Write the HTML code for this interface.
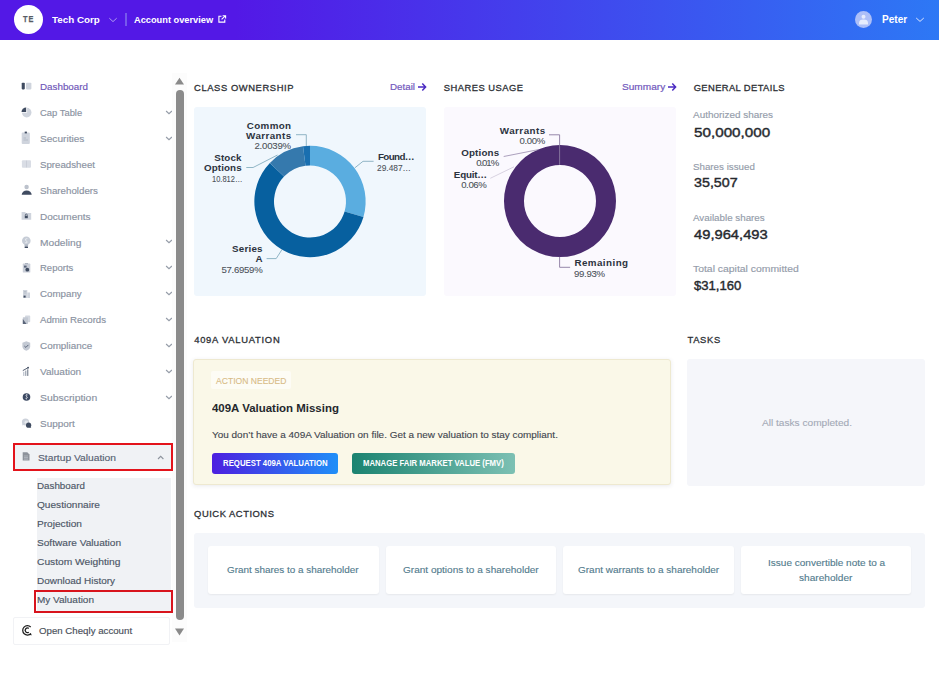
<!DOCTYPE html>
<html><head><meta charset="utf-8">
<style>
html,body{margin:0;padding:0;width:939px;height:675px;overflow:hidden;background:#fff;}
body{position:relative;font-family:"Liberation Sans",sans-serif;}
.t{position:absolute;white-space:nowrap;line-height:1;}
.b{position:absolute;}
svg.b{overflow:visible;}
</style></head><body>
<div class="b" style="left:0px;top:0px;width:939px;height:40px;background:linear-gradient(90deg,#5318E6 25%,#2D78F5 100%);"></div>
<div class="b" style="left:13.5px;top:4.5px;width:29px;height:29px;border-radius:50%;background:#fff;"></div>
<div class="t" style="left:23.0px;top:15.4px;font-size:9.2px;font-weight:700;color:#575c64;letter-spacing:1.3px;-webkit-text-stroke:0.25px #575c64;transform:scaleX(0.8);transform-origin:0 0;">TE</div>
<div class="t" style="left:52.30px;top:15.36px;font-size:9.50px;color:#fff;font-weight:700;transform:scaleX(1.0330);transform-origin:0 0;">Tech Corp</div>
<svg class="b" style="left:108px;top:16.5px" width="10" height="6" viewBox="0 0 10 6"><path d="M1.3 1.2 L5 4.6 L8.7 1.2" fill="none" stroke="#b7a6f2" stroke-width="0.9"/></svg>
<div class="b" style="left:125.3px;top:13px;width:1.5px;height:12.5px;background:#7659ec;"></div>
<div class="t" style="left:134.40px;top:16.20px;font-size:9.10px;color:#fff;font-weight:700;transform:scaleX(1.0167);transform-origin:0 0;">Account overview</div>
<svg class="b" style="left:217.5px;top:15px" width="9" height="8" viewBox="0 0 9 8"><path d="M3.5 1.2 H0.9 V7.1 H6.8 V4.6" fill="none" stroke="#fff" stroke-width="1.1"/><path d="M3.6 4.3 L7.3 0.8 M4.6 0.7 H7.6 V3.6" fill="none" stroke="#fff" stroke-width="1.1"/></svg>
<svg class="b" style="left:854.7px;top:10.8px" width="17" height="17" viewBox="0 0 17 17"><circle cx="8.5" cy="8.5" r="8.5" fill="#adbff8"/><circle cx="8.5" cy="5.8" r="2" fill="#e6ecfd"/><path d="M4 13.4 V12 Q4 8.6 8.5 8.6 Q13 8.6 13 12 V13.4 Z" fill="#e6ecfd"/></svg>
<div class="t" style="left:881.80px;top:14.60px;font-size:10.40px;color:#fff;font-weight:700;transform:scaleX(0.9688);transform-origin:0 0;">Peter</div>
<svg class="b" style="left:914.5px;top:16.5px" width="10" height="6" viewBox="0 0 10 6"><path d="M1.2 1 L5 4.4 L8.8 1" fill="none" stroke="#dde5fd" stroke-width="1.0"/></svg>
<div class="t" style="left:39.80px;top:83.03px;font-size:9.30px;color:#6e55b8;font-weight:400;transform:scaleX(1.0550);transform-origin:0 0;-webkit-text-stroke:0.15px #6e55b8;">Dashboard</div>
<div class="t" style="left:39.80px;top:108.95px;font-size:9.30px;color:#8a92a1;font-weight:400;transform:scaleX(1.0117);transform-origin:0 0;-webkit-text-stroke:0.15px #8a92a1;">Cap Table</div>
<svg class="b" style="left:165px;top:109.8px" width="8" height="5" viewBox="0 0 8 5"><path d="M1.1 1 L4 3.7 L6.9 1" fill="none" stroke="#959ca8" stroke-width="1.15"/></svg>
<div class="t" style="left:39.80px;top:134.87px;font-size:9.30px;color:#8a92a1;font-weight:400;transform:scaleX(1.0873);transform-origin:0 0;-webkit-text-stroke:0.15px #8a92a1;">Securities</div>
<svg class="b" style="left:165px;top:135.7px" width="8" height="5" viewBox="0 0 8 5"><path d="M1.1 1 L4 3.7 L6.9 1" fill="none" stroke="#959ca8" stroke-width="1.15"/></svg>
<div class="t" style="left:39.80px;top:160.79px;font-size:9.30px;color:#8a92a1;font-weight:400;transform:scaleX(1.0428);transform-origin:0 0;-webkit-text-stroke:0.15px #8a92a1;">Spreadsheet</div>
<div class="t" style="left:39.80px;top:186.71px;font-size:9.30px;color:#8a92a1;font-weight:400;transform:scaleX(1.0485);transform-origin:0 0;-webkit-text-stroke:0.15px #8a92a1;">Shareholders</div>
<div class="t" style="left:39.80px;top:212.63px;font-size:9.30px;color:#8a92a1;font-weight:400;transform:scaleX(1.0757);transform-origin:0 0;-webkit-text-stroke:0.15px #8a92a1;">Documents</div>
<div class="t" style="left:39.80px;top:238.55px;font-size:9.30px;color:#8a92a1;font-weight:400;transform:scaleX(1.0943);transform-origin:0 0;-webkit-text-stroke:0.15px #8a92a1;">Modeling</div>
<svg class="b" style="left:165px;top:239.4px" width="8" height="5" viewBox="0 0 8 5"><path d="M1.1 1 L4 3.7 L6.9 1" fill="none" stroke="#959ca8" stroke-width="1.15"/></svg>
<div class="t" style="left:39.80px;top:264.47px;font-size:9.30px;color:#8a92a1;font-weight:400;transform:scaleX(1.0227);transform-origin:0 0;-webkit-text-stroke:0.15px #8a92a1;">Reports</div>
<svg class="b" style="left:165px;top:265.3px" width="8" height="5" viewBox="0 0 8 5"><path d="M1.1 1 L4 3.7 L6.9 1" fill="none" stroke="#959ca8" stroke-width="1.15"/></svg>
<div class="t" style="left:39.80px;top:290.39px;font-size:9.30px;color:#8a92a1;font-weight:400;transform:scaleX(1.0476);transform-origin:0 0;-webkit-text-stroke:0.15px #8a92a1;">Company</div>
<svg class="b" style="left:165px;top:291.3px" width="8" height="5" viewBox="0 0 8 5"><path d="M1.1 1 L4 3.7 L6.9 1" fill="none" stroke="#959ca8" stroke-width="1.15"/></svg>
<div class="t" style="left:39.80px;top:316.31px;font-size:9.30px;color:#8a92a1;font-weight:400;transform:scaleX(1.0397);transform-origin:0 0;-webkit-text-stroke:0.15px #8a92a1;">Admin Records</div>
<svg class="b" style="left:165px;top:317.2px" width="8" height="5" viewBox="0 0 8 5"><path d="M1.1 1 L4 3.7 L6.9 1" fill="none" stroke="#959ca8" stroke-width="1.15"/></svg>
<div class="t" style="left:39.80px;top:342.23px;font-size:9.30px;color:#8a92a1;font-weight:400;transform:scaleX(1.0630);transform-origin:0 0;-webkit-text-stroke:0.15px #8a92a1;">Compliance</div>
<svg class="b" style="left:165px;top:343.1px" width="8" height="5" viewBox="0 0 8 5"><path d="M1.1 1 L4 3.7 L6.9 1" fill="none" stroke="#959ca8" stroke-width="1.15"/></svg>
<div class="t" style="left:39.80px;top:368.15px;font-size:9.30px;color:#8a92a1;font-weight:400;transform:scaleX(1.0789);transform-origin:0 0;-webkit-text-stroke:0.15px #8a92a1;">Valuation</div>
<svg class="b" style="left:165px;top:369.0px" width="8" height="5" viewBox="0 0 8 5"><path d="M1.1 1 L4 3.7 L6.9 1" fill="none" stroke="#959ca8" stroke-width="1.15"/></svg>
<div class="t" style="left:39.80px;top:394.07px;font-size:9.30px;color:#8a92a1;font-weight:400;transform:scaleX(1.1177);transform-origin:0 0;-webkit-text-stroke:0.15px #8a92a1;">Subscription</div>
<svg class="b" style="left:165px;top:394.9px" width="8" height="5" viewBox="0 0 8 5"><path d="M1.1 1 L4 3.7 L6.9 1" fill="none" stroke="#959ca8" stroke-width="1.15"/></svg>
<div class="t" style="left:39.80px;top:419.99px;font-size:9.30px;color:#8a92a1;font-weight:400;transform:scaleX(1.0685);transform-origin:0 0;-webkit-text-stroke:0.15px #8a92a1;">Support</div>
<svg class="b" style="left:20px;top:81.0px" width="14" height="14" viewBox="0 0 14 14"><rect x="1.7" y="1.7" width="3.1" height="6.7" rx="0.8" fill="#3f4b60"/><rect x="6" y="1.7" width="5.4" height="6.7" rx="0.8" fill="#cfd4dd"/></svg>
<svg class="b" style="left:20px;top:105.0px" width="14" height="14" viewBox="0 0 14 14"><circle cx="6.7" cy="7.6" r="4.8" fill="#cfd4dd"/><path d="M6.2 2.4 V7.1 H1.5 A4.8 4.8 0 0 1 6.2 2.4Z" fill="#3f4b60"/><path d="M6.7 7.6 L6.7 2.8 M6.7 7.6 L1.9 7.6" stroke="#fff" stroke-width="0.7"/></svg>
<svg class="b" style="left:20px;top:131.0px" width="14" height="14" viewBox="0 0 14 14"><rect x="1.7" y="1.5" width="8.1" height="11.4" rx="1" fill="#cfd4dd"/><rect x="4.7" y="0.6" width="2.2" height="1.8" fill="#3f4b60"/><path d="M3.5 7 H6 M3.5 9 H8" stroke="#aab1bd" stroke-width="0.7"/></svg>
<svg class="b" style="left:20px;top:159.0px" width="14" height="14" viewBox="0 0 14 14"><rect x="1.9" y="1.2" width="9.1" height="7.6" rx="1" fill="#d9dde5"/><path d="M6.5 1.6 V8.4" stroke="#bfc5cf" stroke-width="0.6"/></svg>
<svg class="b" style="left:20px;top:183.2px" width="14" height="14" viewBox="0 0 14 14"><circle cx="6.6" cy="4.0" r="2.2" fill="#bcc2cc"/><path d="M1.7 11.8 A5 4.4 0 0 1 11.7 11.8Z" fill="#3f4b60"/></svg>
<svg class="b" style="left:20px;top:210.0px" width="14" height="14" viewBox="0 0 14 14"><path d="M1.6 2 H5 L6 3 H11.2 V9.8 H1.6Z" fill="#cfd4dd"/><rect x="4.8" y="5.8" width="3" height="2.4" fill="#3f4b60"/><path d="M5.3 5.8 V5 A1 1 0 0 1 7.3 5 V5.8" stroke="#3f4b60" stroke-width="0.7" fill="none"/></svg>
<svg class="b" style="left:20px;top:236.0px" width="14" height="14" viewBox="0 0 14 14"><circle cx="6.3" cy="4.8" r="4.3" fill="#c6ccd6"/><rect x="4.5" y="8.3" width="3.6" height="2.3" fill="#b0b7c3"/><rect x="4.6" y="10.4" width="3.4" height="1.6" rx="0.6" fill="#3f4b60"/><path d="M7.4 2.6 Q5 2.4 5.4 4.2 Q7.4 5 7.1 6.6 Q5.6 7.2 4.9 6.5" stroke="#eef0f4" stroke-width="0.8" fill="none"/></svg>
<svg class="b" style="left:20px;top:260.0px" width="14" height="14" viewBox="0 0 14 14"><rect x="2.8" y="3.6" width="7.5" height="9" rx="0.6" fill="#c9ced8"/><rect x="5" y="3" width="3" height="1.2" fill="#aeb5c1"/><rect x="4" y="5.6" width="2.6" height="2" fill="#59647a"/><circle cx="7.3" cy="9.7" r="1.9" fill="#3f4b60"/></svg>
<svg class="b" style="left:20px;top:288.0px" width="14" height="14" viewBox="0 0 14 14"><rect x="3" y="2" width="4.3" height="8" fill="#cfd4dd"/><rect x="7.3" y="4.5" width="2.7" height="5.5" fill="#cfd4dd"/><rect x="3.6" y="7.6" width="2" height="2" fill="#3f4b60"/><path d="M4 3.5H6.3M4 5H6.3" stroke="#aab1bd" stroke-width="0.6"/></svg>
<svg class="b" style="left:20px;top:314.0px" width="14" height="14" viewBox="0 0 14 14"><rect x="5" y="1.6" width="5.2" height="6.6" rx="0.8" fill="#d3d8e0"/><rect x="2.8" y="3.3" width="5.2" height="6.6" rx="0.6" fill="#c3c9d3"/><path d="M2.8 5 L6.5 9.9 H2.8Z" fill="#5a6579"/></svg>
<svg class="b" style="left:20px;top:340.0px" width="14" height="14" viewBox="0 0 14 14"><path d="M6.3 1.3 L10.2 2.7 V6.4 Q10.2 9.3 6.3 10.7 Q2.4 9.3 2.4 6.4 V2.7Z" fill="#c3c9d3"/><path d="M4.4 6.1 L5.9 7.4 L8.4 4.9" stroke="#59647a" stroke-width="1" fill="none"/></svg>
<svg class="b" style="left:20px;top:366.0px" width="14" height="14" viewBox="0 0 14 14"><rect x="3" y="5.8" width="1.4" height="4.1" fill="#c3c9d3"/><rect x="5" y="4.6" width="1.4" height="5.3" fill="#a9b0bb"/><rect x="7" y="3.3" width="1.4" height="6.6" fill="#8f97a4"/><path d="M2.8 4.6 L7.9 1.8" stroke="#3f4b60" stroke-width="0.9"/><circle cx="8.1" cy="1.7" r="0.9" fill="#3f4b60"/></svg>
<svg class="b" style="left:20px;top:390.0px" width="14" height="14" viewBox="0 0 14 14"><circle cx="6.5" cy="7.0" r="3.8" fill="#3d4a63"/><path d="M7.5 5.0 Q6.1 4.5 5.9 5.8 Q7.5 6.8 7.2 8.0 Q6.3 8.8 5.5 8.3 M6.6 4.1 V4.8 M6.5 8.6 V9.4" stroke="#eef0f5" stroke-width="0.8" fill="none"/></svg>
<svg class="b" style="left:20px;top:417.0px" width="14" height="14" viewBox="0 0 14 14"><circle cx="5.5" cy="5.0" r="3.6" fill="#cdd2db"/><path d="M2.4 7 L2 8.6 L3.6 7.8" fill="#cdd2db"/><circle cx="6.3" cy="5.2" r="1.8" fill="#e6e9ee"/><circle cx="8.6" cy="8.2" r="2.6" fill="#3f4b60"/><path d="M10.4 10 L11.3 11 L9.4 10.8" fill="#3f4b60"/></svg>
<div class="b" style="left:172px;top:73px;width:15px;height:569px;background:#fcfcfc;"></div>
<svg class="b" style="left:174px;top:77px" width="11" height="8" viewBox="0 0 11 8"><path d="M1 7.4 L5.5 0.8 L10 7.4Z" fill="#8a8a8a"/></svg>
<div class="b" style="left:176px;top:90px;width:8px;height:530px;background:#8b8b8b;border-radius:4px;"></div>
<svg class="b" style="left:174px;top:627.5px" width="11" height="8" viewBox="0 0 11 8"><path d="M1 0.6 L5.5 7.4 L10 0.6Z" fill="#8a8a8a"/></svg>
<div class="b" style="left:12.5px;top:443px;width:160.1px;height:27.80000000000001px;border:2.5px solid #e3131b;background:#f0f2f5;box-sizing:border-box;"></div>
<svg class="b" style="left:21px;top:450px" width="11" height="12" viewBox="0 0 11 12"><path d="M1.7 2.3 H6.3 L8.5 4.5 V10.5 H1.7Z" fill="#8d929b"/><path d="M3 6 H7 M3 7.6 H7 M3 9.1 H7" stroke="#c8ccd3" stroke-width="0.6"/></svg>
<div class="t" style="left:38.00px;top:453.73px;font-size:9.30px;color:#586273;font-weight:400;transform:scaleX(1.1039);transform-origin:0 0;-webkit-text-stroke:0.15px #586273;">Startup Valuation</div>
<svg class="b" style="left:156px;top:454px" width="9" height="7" viewBox="0 0 9 7"><path d="M2 5 L4.7 2.3 L7.4 5" fill="none" stroke="#8e949e" stroke-width="1.1"/></svg>
<div class="b" style="left:36.5px;top:477.5px;width:134.1px;height:134.5px;background:#f0f2f5;"></div>
<div class="t" style="left:36.90px;top:482.33px;font-size:9.30px;color:#4d5767;font-weight:400;transform:scaleX(1.0528);transform-origin:0 0;-webkit-text-stroke:0.15px #4d5767;">Dashboard</div>
<div class="t" style="left:36.90px;top:501.26px;font-size:9.30px;color:#4d5767;font-weight:400;transform:scaleX(1.0863);transform-origin:0 0;-webkit-text-stroke:0.15px #4d5767;">Questionnaire</div>
<div class="t" style="left:36.90px;top:520.19px;font-size:9.30px;color:#4d5767;font-weight:400;transform:scaleX(1.0881);transform-origin:0 0;-webkit-text-stroke:0.15px #4d5767;">Projection</div>
<div class="t" style="left:36.90px;top:539.12px;font-size:9.30px;color:#4d5767;font-weight:400;transform:scaleX(1.0869);transform-origin:0 0;-webkit-text-stroke:0.15px #4d5767;">Software Valuation</div>
<div class="t" style="left:36.90px;top:558.05px;font-size:9.30px;color:#4d5767;font-weight:400;transform:scaleX(1.1001);transform-origin:0 0;-webkit-text-stroke:0.15px #4d5767;">Custom Weighting</div>
<div class="t" style="left:36.90px;top:576.98px;font-size:9.30px;color:#4d5767;font-weight:400;transform:scaleX(1.0717);transform-origin:0 0;-webkit-text-stroke:0.15px #4d5767;">Download History</div>
<div class="t" style="left:36.90px;top:595.91px;font-size:9.30px;color:#4d5767;font-weight:400;transform:scaleX(1.0739);transform-origin:0 0;-webkit-text-stroke:0.15px #4d5767;">My Valuation</div>
<div class="b" style="left:34px;top:590px;width:138.8px;height:22.600000000000023px;border:2.2px solid #d8141d;box-sizing:border-box;"></div>
<div class="b" style="left:12.7px;top:617.4px;width:157.8px;height:27.200000000000045px;background:#fff;border:1px solid #f1f2f5;border-radius:2px;box-sizing:border-box;"></div>
<svg class="b" style="left:21px;top:624px" width="13" height="13" viewBox="0 0 13 13"><path d="M9.72 2.98 A4.7 4.7 0 1 0 9.9 9.5" fill="none" stroke="#1e1e1e" stroke-width="1.25"/><path d="M9.3 9.2 L11 11.2 L8.6 10.9Z" fill="#1e1e1e"/><path d="M7.8 4.4 A2.3 2.3 0 1 0 7.8 8.2" fill="none" stroke="#1e1e1e" stroke-width="1.3"/></svg>
<div class="t" style="left:38.80px;top:626.93px;font-size:9.30px;color:#4a505a;font-weight:400;transform:scaleX(1.0409);transform-origin:0 0;-webkit-text-stroke:0.15px #4a505a;">Open Cheqly account</div>
<div class="t" style="left:194.10px;top:83.14px;font-size:9.40px;color:#2d3035;font-weight:400;letter-spacing:0.585px;-webkit-text-stroke:0.3px #2d3035;">CLASS OWNERSHIP</div>
<div class="t" style="left:389.90px;top:83.33px;font-size:9.30px;color:#7259bd;font-weight:400;transform:scaleX(1.0513);transform-origin:0 0;-webkit-text-stroke:0.2px #7259bd;">Detail</div>
<svg class="b" style="left:417px;top:82px" width="10" height="10" viewBox="0 0 10 10"><path d="M1 5 H8.5 M5.3 1.6 L8.6 5 L5.3 8.4" fill="none" stroke="#4a2bc2" stroke-width="1.5"/></svg>
<div class="b" style="left:194px;top:107px;width:232px;height:189px;background:#f0f7fd;border-radius:3px;"></div>
<div class="t" style="left:443.80px;top:83.14px;font-size:9.40px;color:#2d3035;font-weight:400;letter-spacing:0.475px;-webkit-text-stroke:0.3px #2d3035;">SHARES USAGE</div>
<div class="t" style="left:621.60px;top:83.23px;font-size:9.30px;color:#7259bd;font-weight:400;transform:scaleX(1.0858);transform-origin:0 0;-webkit-text-stroke:0.2px #7259bd;">Summary</div>
<svg class="b" style="left:666.5px;top:82px" width="10" height="10" viewBox="0 0 10 10"><path d="M1 5 H8.5 M5.3 1.6 L8.6 5 L5.3 8.4" fill="none" stroke="#4a2bc2" stroke-width="1.5"/></svg>
<div class="b" style="left:443.5px;top:107px;width:232.5px;height:189px;background:#fbf9fe;border-radius:3px;"></div>
<div class="t" style="left:693.70px;top:83.34px;font-size:9.40px;color:#2d3035;font-weight:400;letter-spacing:0.388px;-webkit-text-stroke:0.3px #2d3035;">GENERAL DETAILS</div>
<div class="t" style="left:693.10px;top:110.34px;font-size:9.40px;color:#949caa;font-weight:400;transform:scaleX(1.0599);transform-origin:0 0;-webkit-text-stroke:0.15px #949caa;">Authorized shares</div>
<div class="t" style="left:693.60px;top:125.63px;font-size:13.20px;color:#26292e;font-weight:400;transform:scaleX(1.1549);transform-origin:0 0;-webkit-text-stroke:0.4px #26292e;">50,000,000</div>
<div class="t" style="left:693.10px;top:161.74px;font-size:9.40px;color:#949caa;font-weight:400;transform:scaleX(1.0408);transform-origin:0 0;-webkit-text-stroke:0.15px #949caa;">Shares issued</div>
<div class="t" style="left:693.60px;top:176.43px;font-size:13.20px;color:#26292e;font-weight:400;transform:scaleX(1.0823);transform-origin:0 0;-webkit-text-stroke:0.4px #26292e;">35,507</div>
<div class="t" style="left:693.10px;top:212.54px;font-size:9.40px;color:#949caa;font-weight:400;transform:scaleX(1.0451);transform-origin:0 0;-webkit-text-stroke:0.15px #949caa;">Available shares</div>
<div class="t" style="left:693.60px;top:228.33px;font-size:13.20px;color:#26292e;font-weight:400;transform:scaleX(1.1171);transform-origin:0 0;-webkit-text-stroke:0.4px #26292e;">49,964,493</div>
<div class="t" style="left:693.10px;top:264.44px;font-size:9.40px;color:#949caa;font-weight:400;transform:scaleX(1.1087);transform-origin:0 0;-webkit-text-stroke:0.15px #949caa;">Total capital committed</div>
<div class="t" style="left:693.60px;top:279.03px;font-size:13.20px;color:#26292e;font-weight:400;transform:scaleX(0.9933);transform-origin:0 0;-webkit-text-stroke:0.4px #26292e;">$31,160</div>
<div class="t" style="left:194.20px;top:334.64px;font-size:9.40px;color:#2d3035;font-weight:400;letter-spacing:0.751px;-webkit-text-stroke:0.3px #2d3035;">409A VALUATION</div>
<div class="b" style="left:193.3px;top:359.3px;width:477.3px;height:125.69999999999999px;background:#faf8e8;border:1px solid #eee9d0;border-radius:3px;box-sizing:border-box;box-shadow:0 1px 4px rgba(40,50,80,0.10);"></div>
<div class="b" style="left:211.3px;top:371px;width:79.69999999999999px;height:18.30000000000001px;background:#fdfcf5;border-radius:2px;"></div>
<div class="t" style="left:216.20px;top:376.52px;font-size:8.60px;color:#d8bb86;font-weight:400;transform:scaleX(0.9969);transform-origin:0 0;-webkit-text-stroke:0.1px #d8bb86;">ACTION NEEDED</div>
<div class="t" style="left:211.90px;top:403.17px;font-size:10.90px;color:#25282d;font-weight:700;transform:scaleX(1.0519);transform-origin:0 0;">409A Valuation Missing</div>
<div class="t" style="left:212.30px;top:430.63px;font-size:9.30px;color:#41464e;font-weight:400;transform:scaleX(1.0708);transform-origin:0 0;-webkit-text-stroke:0.12px #41464e;">You don’t have a 409A Valuation on file. Get a new valuation to stay compliant.</div>
<div class="b" style="left:211.6px;top:452.9px;width:126.4px;height:20.80000000000001px;background:linear-gradient(90deg,#4c1fe0,#1f8ff8);border-radius:3px;"></div>
<div class="t" style="left:222.70px;top:459.12px;font-size:8.60px;color:#fff;font-weight:700;transform:scaleX(0.9066);transform-origin:0 0;">REQUEST 409A VALUATION</div>
<div class="b" style="left:352.2px;top:453.2px;width:163.00000000000006px;height:20.600000000000023px;background:linear-gradient(90deg,#1b8370,#7cc0b3);border-radius:3px;"></div>
<div class="t" style="left:363.20px;top:459.12px;font-size:8.60px;color:#fff;font-weight:700;transform:scaleX(0.9001);transform-origin:0 0;">MANAGE FAIR MARKET VALUE (FMV)</div>
<div class="t" style="left:687.50px;top:334.64px;font-size:9.40px;color:#2d3035;font-weight:400;letter-spacing:0.668px;-webkit-text-stroke:0.3px #2d3035;">TASKS</div>
<div class="b" style="left:687px;top:359px;width:238px;height:127px;background:#f5f6fa;border-radius:3px;"></div>
<div class="t" style="left:761.50px;top:418.73px;font-size:9.30px;color:#a3a9b6;font-weight:400;transform:scaleX(1.0882);transform-origin:0 0;-webkit-text-stroke:0.1px #a3a9b6;">All tasks completed.</div>
<div class="t" style="left:194.10px;top:508.84px;font-size:9.40px;color:#2d3035;font-weight:400;letter-spacing:0.529px;-webkit-text-stroke:0.3px #2d3035;">QUICK ACTIONS</div>
<div class="b" style="left:194px;top:533.3px;width:731px;height:74.5px;background:#f4f6fa;border-radius:3px;"></div>
<div class="b" style="left:208px;top:546.3px;width:170.5px;height:47.700000000000045px;background:#fff;border-radius:3px;box-shadow:0 1px 2px rgba(0,0,0,0.06);"></div>
<div class="b" style="left:385.5px;top:546.3px;width:170.5px;height:47.700000000000045px;background:#fff;border-radius:3px;box-shadow:0 1px 2px rgba(0,0,0,0.06);"></div>
<div class="b" style="left:563px;top:546.3px;width:170.5px;height:47.700000000000045px;background:#fff;border-radius:3px;box-shadow:0 1px 2px rgba(0,0,0,0.06);"></div>
<div class="b" style="left:740.5px;top:546.3px;width:170.5px;height:47.700000000000045px;background:#fff;border-radius:3px;box-shadow:0 1px 2px rgba(0,0,0,0.06);"></div>
<div class="t" style="left:227.20px;top:566.03px;font-size:9.30px;color:#527b8d;font-weight:400;transform:scaleX(1.0652);transform-origin:0 0;-webkit-text-stroke:0.12px #527b8d;">Grant shares to a shareholder</div>
<div class="t" style="left:402.70px;top:566.13px;font-size:9.30px;color:#527b8d;font-weight:400;transform:scaleX(1.0802);transform-origin:0 0;-webkit-text-stroke:0.12px #527b8d;">Grant options to a shareholder</div>
<div class="t" style="left:577.70px;top:566.13px;font-size:9.30px;color:#527b8d;font-weight:400;transform:scaleX(1.0754);transform-origin:0 0;-webkit-text-stroke:0.12px #527b8d;">Grant warrants to a shareholder</div>
<div class="t" style="left:767.60px;top:558.53px;font-size:9.30px;color:#527b8d;font-weight:400;transform:scaleX(1.0794);transform-origin:0 0;-webkit-text-stroke:0.12px #527b8d;">Issue convertible note to a</div>
<div class="t" style="left:799.30px;top:573.93px;font-size:9.30px;color:#527b8d;font-weight:400;transform:scaleX(1.0873);transform-origin:0 0;-webkit-text-stroke:0.12px #527b8d;">shareholder</div>
<svg class="b" style="left:0;top:0" width="939" height="675" viewBox="0 0 939 675"><path d="M310.00 145.85 A55.65 55.65 0 0 1 363.45 216.98 L344.58 211.52 A36 36 0 0 0 310.00 165.50Z" fill="#5aade0"/><path d="M363.45 216.98 A55.65 55.65 0 1 1 269.87 162.94 L284.04 176.56 A36 36 0 1 0 344.58 211.52Z" fill="#07609f"/><path d="M269.87 162.94 A55.65 55.65 0 0 1 303.01 146.29 L305.48 165.79 A36 36 0 0 0 284.04 176.56Z" fill="#3579ad"/><path d="M303.01 146.29 A55.65 55.65 0 0 1 310.00 145.85 L310.00 165.50 A36 36 0 0 0 305.48 165.79Z" fill="#196fb0"/><path d="M296 134.7 H306.3 V146" fill="none" stroke="#86aec0" stroke-width="0.9"/><path d="M246.3 167.5 H253.1 L277.5 155" fill="none" stroke="#86aec0" stroke-width="0.9"/><path d="M373.6 161.3 H363 L354.9 167.8" fill="none" stroke="#86aec0" stroke-width="0.9"/><path d="M266.6 258.6 H276.2 L281.9 249.7" fill="none" stroke="#86aec0" stroke-width="0.9"/><path d="M560.00 145.10 A56 56 0 1 1 559.99 145.10 L559.99 165.10 A36 36 0 1 0 560.00 165.10Z" fill="#4a2b6f"/><path d="M549 134.8 H559.6 V164.8" fill="none" stroke="#8a7aa0" stroke-width="0.9"/><path d="M503.7 156.5 L539 149.5" fill="none" stroke="#8a7aa0" stroke-width="0.7"/><path d="M490.3 178.3 L514 166.8" fill="none" stroke="#c9c2d4" stroke-width="0.7"/><path d="M559.6 256.8 V267.3 H570.1" fill="none" stroke="#8a7aa0" stroke-width="0.9"/></svg>
<div class="t" style="left:246.80px;top:121.10px;font-size:9.80px;color:#2c3340;font-weight:700;letter-spacing:0.367px;">Common</div>
<div class="t" style="left:246.10px;top:131.30px;font-size:9.80px;color:#2c3340;font-weight:700;letter-spacing:0.413px;">Warrants</div>
<div class="t" style="left:254.40px;top:141.37px;font-size:9.60px;color:#4a5058;font-weight:400;letter-spacing:-0.200px;-webkit-text-stroke:0.08px #4a5058;">2.0039%</div>
<div class="t" style="left:214.20px;top:152.70px;font-size:9.80px;color:#2c3340;font-weight:700;letter-spacing:0.174px;">Stock</div>
<div class="t" style="left:204.00px;top:163.30px;font-size:9.80px;color:#2c3340;font-weight:700;letter-spacing:0.098px;">Options</div>
<div class="t" style="left:211.60px;top:173.97px;font-size:9.60px;color:#4a5058;font-weight:400;transform:scaleX(0.7802);transform-origin:0 0;-webkit-text-stroke:0.08px #4a5058;">10.812…</div>
<div class="t" style="left:377.90px;top:152.00px;font-size:9.80px;color:#2c3340;font-weight:700;letter-spacing:-0.606px;">Found…</div>
<div class="t" style="left:377.40px;top:163.07px;font-size:9.60px;color:#4a5058;font-weight:400;transform:scaleX(0.8725);transform-origin:0 0;-webkit-text-stroke:0.08px #4a5058;">29.487…</div>
<div class="t" style="left:232.00px;top:243.80px;font-size:9.80px;color:#2c3340;font-weight:700;letter-spacing:0.216px;">Series</div>
<div class="t" style="left:255.42px;top:254.30px;font-size:9.80px;color:#2c3340;font-weight:700;">A</div>
<div class="t" style="left:221.50px;top:265.07px;font-size:9.60px;color:#4a5058;font-weight:400;letter-spacing:-0.291px;-webkit-text-stroke:0.08px #4a5058;">57.6959%</div>
<div class="t" style="left:499.80px;top:126.10px;font-size:9.80px;color:#2c3340;font-weight:700;letter-spacing:0.470px;">Warrants</div>
<div class="t" style="left:519.60px;top:135.77px;font-size:9.60px;color:#4a5058;font-weight:400;letter-spacing:-0.404px;-webkit-text-stroke:0.08px #4a5058;">0.00%</div>
<div class="t" style="left:461.20px;top:148.10px;font-size:9.80px;color:#2c3340;font-weight:700;letter-spacing:0.164px;">Options</div>
<div class="t" style="left:476.20px;top:157.87px;font-size:9.60px;color:#4a5058;font-weight:400;letter-spacing:-1.054px;-webkit-text-stroke:0.08px #4a5058;">0.01%</div>
<div class="t" style="left:453.80px;top:169.80px;font-size:9.80px;color:#2c3340;font-weight:700;letter-spacing:-0.200px;">Equit…</div>
<div class="t" style="left:461.20px;top:179.97px;font-size:9.60px;color:#4a5058;font-weight:400;letter-spacing:-0.404px;-webkit-text-stroke:0.08px #4a5058;">0.06%</div>
<div class="t" style="left:574.40px;top:258.00px;font-size:9.80px;color:#2c3340;font-weight:700;letter-spacing:0.450px;">Remaining</div>
<div class="t" style="left:574.00px;top:268.77px;font-size:9.60px;color:#4a5058;font-weight:400;letter-spacing:-0.293px;-webkit-text-stroke:0.08px #4a5058;">99.93%</div>
</body></html>
